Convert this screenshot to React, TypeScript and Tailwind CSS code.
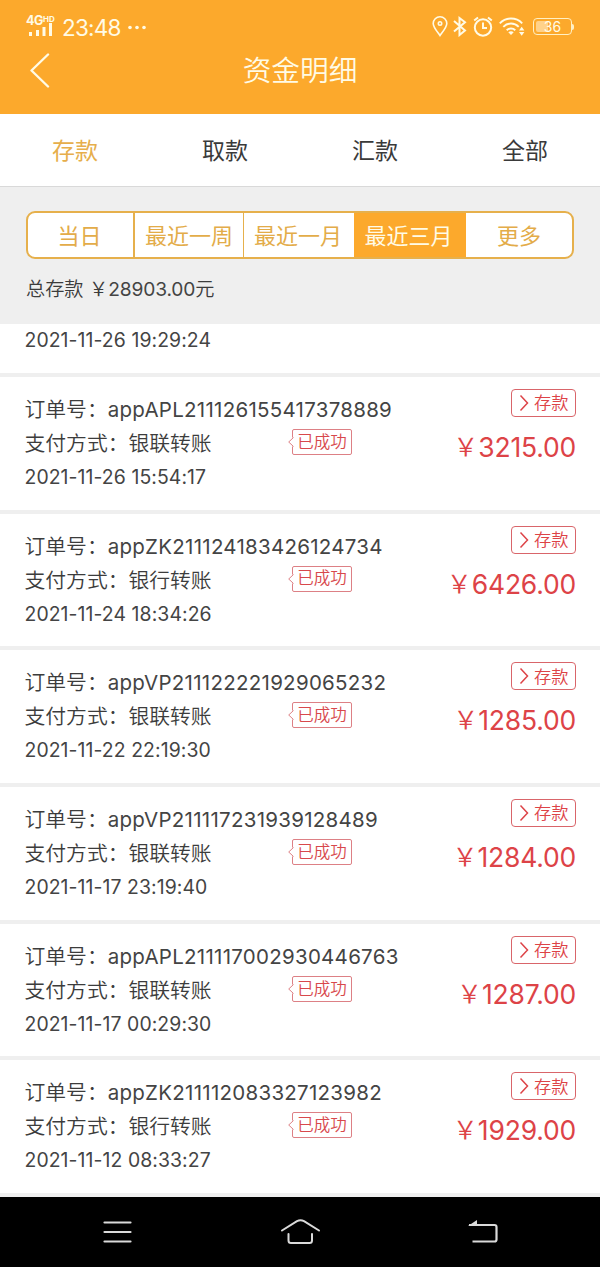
import React from 'react';

interface Order {
  id: string;
  method: string;
  time: string;
  amount: string;
}

const orders: Order[] = [
  { id: 'appAPL211126155417378889', method: '银联转账', time: '2021-11-26 15:54:17', amount: '3215.00' },
  { id: 'appZK211124183426124734', method: '银行转账', time: '2021-11-24 18:34:26', amount: '6426.00' },
  { id: 'appVP211122221929065232', method: '银联转账', time: '2021-11-22 22:19:30', amount: '1285.00' },
  { id: 'appVP211117231939128489', method: '银联转账', time: '2021-11-17 23:19:40', amount: '1284.00' },
  { id: 'appAPL211117002930446763', method: '银联转账', time: '2021-11-17 00:29:30', amount: '1287.00' },
  { id: 'appZK211112083327123982', method: '银行转账', time: '2021-11-12 08:33:27', amount: '1929.00' },
];

const tabs = ['存款', '取款', '汇款', '全部'];

const StatusBar: React.FC = () => (
  <div className="flex h-[50px] items-start text-[#fffbe6]">
    {/* Signal */}
    <div className="ml-[26px] mt-[15px] w-[29px]">
      <div className="flex h-[12px] items-start leading-[12px]">
        <span className="text-[12.500px] font-bold tracking-[-0.4px]">4G</span>
        <span className="text-[8px] font-bold leading-[8px]">HD</span>
      </div>
      <svg className="-mt-[4px] ml-[3px]" width="24" height="13" fill="currentColor">
        <path d="M0 9h3v4H0zM7 7h3v6H7zM13.500 4h3v9h-3zM20 0h3v13h-3z" />
      </svg>
    </div>
    <span className="ml-[7px] mt-[14px] text-[22.500px] font-normal leading-[28px] tracking-[-0.8px]">23:48</span>
    <svg className="ml-[7px] mt-[25px]" width="19" height="5" fill="currentColor">
      <circle cx="2" cy="2.500" r="1.800" />
      <circle cx="9" cy="2.500" r="1.800" />
      <circle cx="16" cy="2.500" r="1.800" />
    </svg>

    <div className="ml-auto mr-[26px] mt-[15px] flex items-start">
      {/* Location */}
      <svg className="mr-[5px]" width="16" height="22" viewBox="0 0 16 22" fill="none" stroke="currentColor" strokeWidth="1.600">
        <path d="M8 20.500C6 17.500 1.200 12.500 1.200 8.500a6.800 6.800 0 0 1 13.600 0c0 4-4.800 9-6.800 12z" />
        <circle cx="8" cy="8.500" r="1.700" />
      </svg>
      {/* Bluetooth */}
      <svg className="mr-[6px]" width="14" height="22" viewBox="0 0 14 22" fill="none" stroke="currentColor" strokeWidth="2">
        <path d="M1 6l11 9.500-5.500 4.500V3L12 7.200 1 16.500" />
      </svg>
      {/* Alarm */}
      <svg className="mr-[6px]" width="20" height="22" viewBox="0 0 20 22" fill="none" stroke="currentColor" strokeWidth="2">
        <circle cx="10" cy="12.500" r="8.200" />
        <path d="M10 7.500v5.500h4M1.200 5.500L5 2.500M15 2.500l3.800 3" />
      </svg>
      {/* Wifi */}
      <svg className="mr-[8px]" width="26" height="22" viewBox="0 0 26 22" fill="none" stroke="currentColor" strokeWidth="1.900">
        <path d="M.8 8.300a15.500 15.500 0 0 1 22.400 0M4.300 11.800a10.700 10.700 0 0 1 15.400 0M7.700 15.200a6.200 6.200 0 0 1 8.600 0" />
        <path d="M9.300 17.200q2.700-1.800 5.400 0L12 20z" fill="currentColor" stroke="none" />
        <path d="M20 15.500l2.700-3.700 2.700 3.700zM20 17l2.700 3.700 2.700-3.700z" fill="currentColor" stroke="none" />
      </svg>
      {/* Battery */}
      <div className="mt-[3px] flex items-center">
        <div className="relative flex h-[17px] w-[39px] items-center justify-center rounded-[4px] border border-[#fff0c4] text-[14px] leading-none">
          <span className="absolute left-[2px] top-[2px] h-[11px] w-[12px] rounded-l-[2px] bg-[#ffd28a]" />
          <span className="relative">36</span>
        </div>
        <span className="h-[6px] w-[2px] rounded-r-full bg-[#fff0c4]" />
      </div>
    </div>
  </div>
);

const OrderRow: React.FC<{ order: Order }> = ({ order }) => (
  <div className="flex h-[136.700px] justify-between border-b-4 border-[#efefef] bg-white pl-[24.500px] pr-[24px]">
    <div className="pt-[16px] text-[20.800px] font-[350] leading-[34px] text-[#3c3c3c]">
      <p className="whitespace-nowrap">
        订单号：<span className="text-[20.500px] font-normal tracking-[0.27px] text-[#444]">{order.id}</span>
      </p>
      <div className="flex w-[327.500px] items-center justify-between">
        <span>支付方式：{order.method}</span>
        {/* Bubble with a small pointer on the left edge */}
        <span className="relative -mt-[4px] flex h-[26px] w-[60px] items-center justify-center rounded-[2px] border border-[#dd8085] text-[16.500px] leading-none text-[#d8484c]">
          已成功
          <svg className="absolute -left-[5px] top-[7px]" width="6" height="10" viewBox="0 0 6 10">
            <path d="M6 0v10H5L.5 5 5 0z" fill="#fff" />
            <path d="M5.500.5L.7 5l4.800 4.500" fill="none" stroke="#dd8085" />
          </svg>
        </span>
      </div>
      <p className="text-[19.400px] font-normal leading-[33px] tracking-[0.08px] text-[#444]">{order.time}</p>
    </div>
    <div className="flex flex-col items-end text-[#dd4347]">
      <div className="mt-[12px] flex h-[28px] w-[65px] items-center rounded-[4px] border border-[#d9656a] pl-[7px]">
        <svg width="10" height="18" viewBox="0 0 10 18" fill="none" stroke="currentColor" strokeWidth="1.500">
          <path d="M1.500 1.500L8.500 9l-7 7.500" />
        </svg>
        <span className="ml-[5px] text-[17.300px] font-[350] leading-none">存款</span>
      </div>
      <div className="mt-[13px] flex items-center font-[350] leading-[34px]">
        <span className="text-[25px]">￥</span>
        <span className="text-[26.500px] font-normal tracking-[-0.2px]">{order.amount}</span>
      </div>
    </div>
  </div>
);

const App: React.FC = () => {
  return (
    <div className="flex h-[1267px] w-[600px] flex-col overflow-hidden bg-white font-['Inter','Noto_Sans_CJK_SC',sans-serif]">
      <header className="h-[114px] shrink-0 bg-[#fca92c]">
        <StatusBar />
        <div className="grid h-[40px] grid-cols-[60px_1fr_60px] items-center text-[#fffbe6]">
          <svg className="-mt-[2px] ml-[29px]" width="22" height="36" viewBox="0 0 22 36" fill="none" stroke="currentColor" strokeWidth="2.400" strokeLinecap="round" strokeLinejoin="round">
            <path d="M19 2.500L2.500 18.500 19 34.500" />
          </svg>
          <h1 className="text-center text-[28.700px] font-[350] leading-[41px]">资金明细</h1>
        </div>
      </header>

      {/* Tabs */}
      <nav className="grid h-[73px] shrink-0 grid-cols-4 border-b border-[#d9d9d9] text-center text-[23px] leading-[74px] text-[#3a3a3a]">
        {tabs.map((tab, i) => (
          <span key={tab} className={i === 0 ? 'text-[#e6ae4b]' : ''}>{tab}</span>
        ))}
      </nav>

      {/* Range filter and total */}
      <section className="h-[137px] shrink-0 bg-[#efefef] px-[26px] pt-[24px]">
        <div className="flex h-[48px] overflow-hidden rounded-[9px] border-2 border-[#e6b04c] bg-white text-center text-[22px] leading-[46px] text-[#e3ac49]">
          <span className="w-[107px] border-r-2 border-[#e6b04c] pr-[2px]">当日</span>
          <span className="w-[109px] border-r border-[#e6b04c]">最近一周</span>
          <span className="w-[110px] pr-[2px]">最近一月</span>
          <span className="w-[112px] bg-[#fca92c] pr-[3px] text-[#fffbe6]">最近三月</span>
          <span className="flex-1">更多</span>
        </div>
        <p className="mt-[15px] text-[19.200px] font-[350] leading-[30px] text-[#3c3c3c]">
          总存款 ￥<span className="font-normal tracking-[-0.15px] text-[#444]">28903.00</span>元
        </p>
      </section>

      <main className="min-h-0 flex-1 overflow-hidden bg-white">
        <div className="h-[53px] border-b-4 border-[#efefef] pl-[24.500px] text-[19.400px] font-normal leading-[32px] tracking-[0.08px] text-[#444]">
          2021-11-26 19:29:24
        </div>
        {orders.map((order) => (
          <OrderRow key={order.id} order={order} />
        ))}
      </main>

      {/* System navigation */}
      <footer className="flex h-[70px] shrink-0 items-start bg-black text-[#dadada]">
        <svg className="ml-[102px] mt-[23px]" width="30" height="24" viewBox="0 0 30 24" fill="none" stroke="currentColor" strokeWidth="2.200" strokeLinecap="round">
          <path d="M2.500 2.500h26M2.500 12h26M2.500 21.500h26" />
        </svg>
        <svg className="ml-[147px] mt-[20px]" width="42" height="30" viewBox="0 0 42 30" fill="none" stroke="currentColor" strokeWidth="2" strokeLinecap="round">
          <path d="M3 13.500L18 4.200q3.500-2 7 0L40 13.500M9.500 17v6.500q0 2.500 2.500 2.500h18.500q2.500 0 2.500-2.500V17" />
        </svg>
        <svg className="ml-[146px] mt-[20px]" width="32" height="30" viewBox="0 0 32 30" fill="none" stroke="currentColor" strokeWidth="2.200">
          <path d="M2 8h25.500q2 0 2 2v12.500q0 2-2 2H5.500" />
          <path d="M1 9l9-6v6z" fill="currentColor" stroke="none" />
        </svg>
      </footer>
    </div>
  );
};

export default App;
